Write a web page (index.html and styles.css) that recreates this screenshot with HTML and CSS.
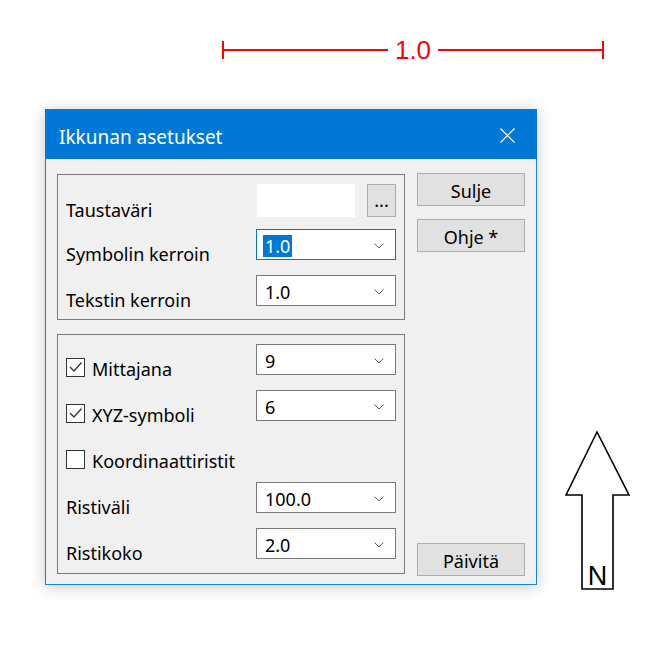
FILE: index.html
```html
<!DOCTYPE html>
<html lang="fi">
<head>
    <meta charset="UTF-8">
    <title>Ikkunan asetukset</title>
    <link rel="stylesheet" href="styles.css">
</head>
<body>
    <div id="desktop">

        <!-- scale bar drawn on the map -->
        <div class="scalebar">
            <span class="tick"></span>
            <span class="bar"></span>
            <span class="scale-label">1.0</span>
            <span class="bar"></span>
            <span class="tick"></span>
        </div>

        <div class="window">
            <div class="titlebar">
                <span class="title">Ikkunan asetukset</span>
                <svg class="close" width="15" height="15" viewBox="0 0 15 15">
                    <path d="M0.5 0.5 L14.5 14.5 M14.5 0.5 L0.5 14.5" stroke="#fff" stroke-width="1.2" fill="none"/>
                </svg>
            </div>

            <div class="content">
                <div class="groups">
                    <div class="group group-top">
                        <div class="row row-color">
                            <span class="label">Taustaväri</span>
                            <span class="swatch"></span>
                            <span class="btn btn-small">...</span>
                        </div>
                        <div class="row">
                            <span class="label">Symbolin kerroin</span>
                            <div class="combo focused">
                                <span class="value selected">1.0</span>
                                <svg class="chevron" width="10" height="6" viewBox="0 0 10 6"><path d="M0.5 0.5 L5 5 L9.5 0.5" stroke="#606060" fill="none"/></svg>
                            </div>
                        </div>
                        <div class="row">
                            <span class="label">Tekstin kerroin</span>
                            <div class="combo">
                                <span class="value">1.0</span>
                                <svg class="chevron" width="10" height="6" viewBox="0 0 10 6"><path d="M0.5 0.5 L5 5 L9.5 0.5" stroke="#606060" fill="none"/></svg>
                            </div>
                        </div>
                    </div>

                    <div class="group group-bottom">
                        <div class="row">
                            <span class="label check-label"><span class="checkbox checked"><svg width="15" height="12" viewBox="0 0 15 12"><path d="M2 6 L6 10 L13.5 1.5" stroke="#333" stroke-width="1.3" fill="none"/></svg></span>Mittajana</span>
                            <div class="combo">
                                <span class="value">9</span>
                                <svg class="chevron" width="10" height="6" viewBox="0 0 10 6"><path d="M0.5 0.5 L5 5 L9.5 0.5" stroke="#606060" fill="none"/></svg>
                            </div>
                        </div>
                        <div class="row">
                            <span class="label check-label"><span class="checkbox checked"><svg width="15" height="12" viewBox="0 0 15 12"><path d="M2 6 L6 10 L13.5 1.5" stroke="#333" stroke-width="1.3" fill="none"/></svg></span>XYZ-symboli</span>
                            <div class="combo">
                                <span class="value">6</span>
                                <svg class="chevron" width="10" height="6" viewBox="0 0 10 6"><path d="M0.5 0.5 L5 5 L9.5 0.5" stroke="#606060" fill="none"/></svg>
                            </div>
                        </div>
                        <div class="row row-grid">
                            <span class="label check-label"><span class="checkbox"></span>Koordinaattiristit</span>
                        </div>
                        <div class="row row-spacing">
                            <span class="label">Ristiväli</span>
                            <div class="combo">
                                <span class="value">100.0</span>
                                <svg class="chevron" width="10" height="6" viewBox="0 0 10 6"><path d="M0.5 0.5 L5 5 L9.5 0.5" stroke="#606060" fill="none"/></svg>
                            </div>
                        </div>
                        <div class="row row-size">
                            <span class="label">Ristikoko</span>
                            <div class="combo">
                                <span class="value">2.0</span>
                                <svg class="chevron" width="10" height="6" viewBox="0 0 10 6"><path d="M0.5 0.5 L5 5 L9.5 0.5" stroke="#606060" fill="none"/></svg>
                            </div>
                        </div>
                    </div>
                </div>

                <div class="actions">
                    <span class="btn">Sulje</span>
                    <span class="btn">Ohje *</span>
                    <span class="btn btn-update">Päivitä</span>
                </div>
            </div>
        </div>

        <!-- north arrow -->
        <svg class="north" width="68" height="164" viewBox="0 0 68 164">
            <polygon points="32,2 1,65 17,65 17,159 48,159 48,65 64,65" fill="#fff" stroke="#000" stroke-width="1.6"/>
            <text x="32.5" y="155" text-anchor="middle" font-family="Liberation Sans, Arial, sans-serif" font-size="27">N</text>
        </svg>

    </div>
</body>
</html>
```

FILE: styles.css
```css
body, html {
    margin: 0;
    padding: 0;
    background: #fff;
    font: 18px 'Noto Sans', 'DejaVu Sans', sans-serif;
    color: #000;
}

#desktop {
    position: relative;
    width: 667px;
    height: 658px;
    overflow: hidden;
}

/* map scale bar */
.scalebar {
    position: absolute;
    left: 222px;
    top: 41px;
    width: 382px;
    height: 18px;
    display: flex;
    align-items: center;
}
.scalebar .tick {
    width: 2px;
    height: 18px;
    background: #ff0000;
}
.scalebar .bar {
    flex: 1;
    height: 2px;
    background: #ff0000;
}
.scale-label {
    padding: 0 7px;
    font: 26px 'Liberation Sans', Arial, sans-serif;
    color: #ff0000;
    line-height: 18px;
}

/* dialog window */
.window {
    position: absolute;
    left: 45px;
    top: 109px;
    width: 492px;
    height: 476px;
    box-sizing: border-box;
    border: 1px solid #1883d7;
    background: #f0f0f0;
    box-shadow: 0 2px 14px rgba(0, 0, 0, 0.22);
    display: flex;
    flex-direction: column;
}

.titlebar {
    height: 50px;
    margin: -1px -1px 0;
    background: #0078d7;
    color: #fff;
    display: flex;
    align-items: center;
    justify-content: space-between;
    padding: 0 22px 0 14px;
}
.title {
    font-size: 19px;
    margin-top: 5px;
}
.close {
    margin-top: 2px;
}

.content {
    flex: 1;
    display: flex;
    gap: 12px;
    padding: 15px 11px 10px;
}

.groups {
    width: 348px;
    display: flex;
    flex-direction: column;
    gap: 14px;
}

.group {
    border: 1px solid #7a7a7a;
    padding: 9px 8px 13px;
    display: flex;
    flex-direction: column;
}
.group-top .row + .row {
    margin-top: 12px;
}
.group-top .row:last-child {
    margin-top: 15px;
}
.group-bottom {
    flex: 1;
    padding-bottom: 8px;
}
.group-bottom .row + .row {
    margin-top: 15px;
}
.group-bottom .row-grid {
    margin-top: 17px;
}
.group-bottom .row-spacing {
    margin-top: 20px;
}
.group-bottom .row-size {
    margin-top: 14px;
}

.row {
    display: flex;
    align-items: flex-end;
    height: 31px;
}
.row-color {
    height: 33px;
}

.label {
    width: 190px;
    flex: none;
    line-height: 24px;
    margin-bottom: -6px;
}
.row-color .label {
    margin-bottom: -5px;
}
.check-label {
    display: flex;
    align-items: center;
}

.checkbox {
    width: 19px;
    height: 19px;
    box-sizing: border-box;
    border: 1px solid #333;
    background: #fff;
    margin: -4px 7px 0 0;
    display: flex;
    align-items: center;
    justify-content: center;
}

.swatch {
    width: 98px;
    height: 33px;
    margin-left: 1px;
    background: #fff;
}

.btn {
    box-sizing: border-box;
    height: 33px;
    padding-top: 2px;
    background: #e1e1e1;
    border: 1px solid #adadad;
    display: flex;
    align-items: center;
    justify-content: center;
}
.btn-small {
    width: 29px;
    margin-left: 12px;
    align-items: flex-end;
    padding: 0 0 7px;
    line-height: 1;
}

.combo {
    width: 140px;
    height: 31px;
    box-sizing: border-box;
    border: 1px solid #7a7a7a;
    background: #fff;
    display: flex;
    align-items: center;
    justify-content: space-between;
    padding: 2px 11px 0 8px;
}
.combo.focused {
    border-color: #0078d7;
    padding-left: 6px;
}
.value {
    line-height: 22px;
}
.value.selected {
    background: #0078d7;
    color: #fff;
    padding: 0 2px;
}

.actions {
    width: 108px;
    display: flex;
    flex-direction: column;
    gap: 13px;
    margin: -1px 0 -2px;
}
.btn-update {
    margin-top: auto;
}

.north {
    position: absolute;
    left: 565px;
    top: 430px;
}
```
